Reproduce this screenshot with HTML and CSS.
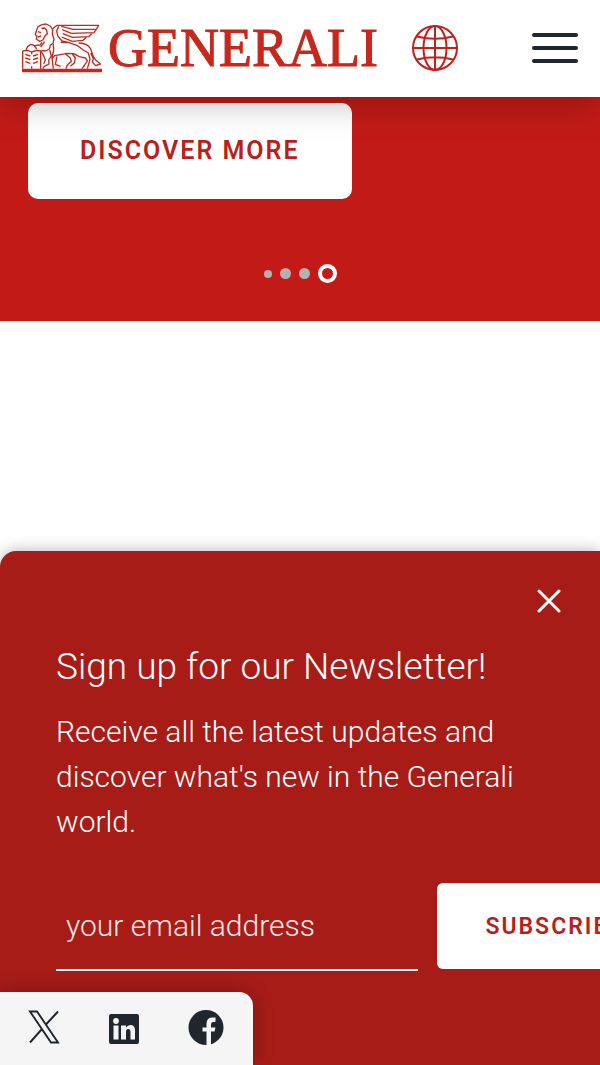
FILE: index.html
```html
<!DOCTYPE html>
<html lang="en">
<head>
<meta charset="utf-8">
<meta name="viewport" content="width=device-width, initial-scale=1">
<title>Generali</title>
<link rel="stylesheet" href="styles.css">
</head>
<body>
<header class="site-header">
  <a class="brand" href="#">
    <svg class="brand-lion" viewBox="36 40 240 150" aria-hidden="true">
      <path class="solid" d="M36 177H276V188H36Z"/>
      <g class="line">
        <path d="M38 124L52 122L65 127L79 122L92 124V177M38 124V177M65 127V134M65 170V177"/>
        <path d="M46 134L61 139M46 145L61 150M46 156L61 161M84 134L69 139M84 145L69 150M84 156L69 161"/>
        <path d="M48 121L53 110L63 104L72 107L80 118M74 108L90 106L96 98"/>
        <path d="M96 45L84 51L79 64L76 75L81 80L79 88L89 95L99 91L104 80L112 72L110 62L103 55L94 56M84 66L93 69M84 82L93 79"/>
        <path d="M96 45L108 43L121 49L128 60L127 74L132 88L129 101L121 107L118 118L106 124L94 122M104 96L92 112"/>
        <path d="M128 57L141 47H266L259 59H190L154 50M157 60L184 71L252 69L259 59M158 72L188 83L236 81L247 70M155 82L187 95L219 92L230 82"/>
        <path d="M146 50L140 65L144 80L156 94L177 99L203 108L220 121L235 130L240 149L232 177M152 98L179 99"/>
        <path d="M206 100Q234 101 242 118L250 141L258 152L271 163L257 168L247 157L250 147L242 130"/>
        <path d="M119 121L124 139L116 151L117 163L103 170L98 177M93 124L101 138L106 151L101 162M130 103L131 121L126 145L130 177"/>
        <path d="M126 147L134 138L171 131L191 132L208 141L226 145L232 153L224 166L216 177M167 133L181 145L184 155L172 166L168 177M187 133L196 145L193 160L181 170M141 140L136 164L152 170"/>
      </g>
    </svg>
    <span class="brand-name">GENERALI</span>
  </a>
  <button class="icon-button globe-button" type="button" aria-label="Choose language">
    <svg class="globe" viewBox="0 0 46 46" aria-hidden="true">
      <circle cx="23" cy="23" r="22"/>
      <ellipse cx="23" cy="23" rx="11.5" ry="22"/>
      <path d="M23 1V45M1 23H45M5 11.500Q23 16 41 11.500M5 34.500Q23 30 41 34.500"/>
    </svg>
  </button>
  <button class="icon-button menu-button" type="button" aria-label="Menu">
    <svg class="menu" viewBox="0 0 46 32" aria-hidden="true"><path d="M2 3H44M2 16H44M2 29H44"/></svg>
  </button>
</header>
<main class="content">
  <section class="hero">
    <a class="cta" href="#">DISCOVER MORE</a>
    <nav class="dots" aria-label="Slides">
      <button class="dot dot-small" type="button" aria-label="Slide 1"></button>
      <button class="dot" type="button" aria-label="Slide 2"></button>
      <button class="dot" type="button" aria-label="Slide 3"></button>
      <button class="dot dot-current" type="button" aria-label="Slide 4" aria-current="true"></button>
    </nav>
  </section>
</main>
<section class="newsletter">
  <button class="icon-button close-button" type="button" aria-label="Close">
    <svg class="close" viewBox="0 0 24 24" aria-hidden="true"><path d="M2 2L22 22M22 2L2 22"/></svg>
  </button>
  <h2 class="newsletter-title">Sign up for our Newsletter!</h2>
  <p class="newsletter-text">Receive all the latest updates and discover what's new in the Generali world.</p>
  <form class="signup">
    <input class="email" type="email" aria-label="Email address" placeholder="your email address">
    <button class="subscribe" type="submit">SUBSCRIBE</button>
  </form>
</section>
<nav class="social" aria-label="Social">
  <a class="social-link" href="#" aria-label="X">
    <svg class="social-icon" viewBox="0 0 36 36" aria-hidden="true">
      <path fill="none" stroke="#20262e" stroke-width="1.900" d="M4 2.500H11L32 33.500H25ZM32 2.500L19.500 16M16 20L4 33.500"/>
    </svg>
  </a>
  <a class="social-link" href="#" aria-label="LinkedIn">
    <svg class="social-icon" viewBox="0 0 36 36" aria-hidden="true">
      <rect x="2" y="5" width="30" height="30" rx="2" fill="#20262e"/>
      <circle cx="9" cy="12" r="2.900" fill="#f5f5f5"/>
      <path fill="#f5f5f5" d="M6.500 16.500H11.500V30.500H6.500ZM14 16.500H19V18.500Q20.500 16 23.500 16Q28 16 28 21.500V30.500H23.500V23Q23.500 20 21.200 20Q19 20 19 23V30.500H14Z"/>
    </svg>
  </a>
  <a class="social-link" href="#" aria-label="Facebook">
    <svg class="social-icon" viewBox="0 0 36 36" aria-hidden="true">
      <circle cx="18" cy="18.500" r="17.500" fill="#20262e"/>
      <path fill="#f5f5f5" d="M18.500 36V22.500H14.500V18.500H18.500V15Q18.500 8.500 24 8.500H27.500V13H25Q23 13 23 15.500V18.500H27.500L26.500 22.500H23V36Z"/>
    </svg>
  </a>
</nav>
</body>
</html>
```

FILE: styles.css
```css
* { box-sizing: border-box; }

body {
  margin: 0;
  min-height: 100vh;
  display: flex;
  flex-direction: column;
  background: #fff;
  font-family: Roboto, "Liberation Sans", sans-serif;
}

.site-header {
  position: relative;
  z-index: 1;
  display: flex;
  align-items: center;
  padding: 20px 22px 21px;
  background: #fff;
  box-shadow: 0 0 40px rgba(0, 0, 0, 0.35);
}

.brand {
  display: flex;
  align-items: center;
  gap: 6px;
  color: #c5281c;
  text-decoration: none;
}

.brand-lion { width: 80px; height: 50px; }
.brand-lion .solid { fill: #c5281c; }
.brand-lion .line {
  fill: none;
  stroke: #c5281c;
  stroke-width: 4;
  stroke-linejoin: round;
}

.brand-name {
  font-family: "Liberation Serif", serif;
  font-size: 54px;
  line-height: 56px;
  -webkit-text-stroke: 1px #c5281c;
}

.icon-button {
  display: flex;
  align-items: center;
  justify-content: center;
  padding: 0;
  border: 0;
  background: none;
}

.globe-button { margin-left: 34px; }
.globe { width: 46px; height: 46px; fill: none; stroke: #bf211c; stroke-width: 2; }
.menu-button { margin-left: auto; }
.menu { width: 46px; height: 32px; fill: none; stroke: #20262e; stroke-width: 4; stroke-linecap: round; }

.content { flex: 1; }

.hero {
  padding: 6px 28px 38px;
  background: #c21b17;
}

.cta {
  display: block;
  width: fit-content;
  padding: 32px 52px;
  border-radius: 10px;
  background: #fff;
  color: #b91f1b;
  font-size: 25px;
  font-weight: 600;
  line-height: 32px;
  letter-spacing: 2px;
  text-decoration: none;
}

.dots {
  display: flex;
  align-items: center;
  justify-content: center;
  gap: 8px;
  margin-top: 65px;
}

.dot {
  width: 11px;
  height: 11px;
  padding: 0;
  border: 0;
  border-radius: 50%;
  background: #b3b1b3;
}

.dot-small { width: 8px; height: 8px; }

.dot-current {
  width: 19px;
  height: 19px;
  border: 4px solid #fff;
  background: none;
}

.newsletter {
  padding: 30px 31px 94px 56px;
  border-top-left-radius: 16px;
  background: #a81c18;
  box-shadow: 0 0 16px rgba(0, 0, 0, 0.3);
  color: #fff;
  overflow: hidden;
}

.close-button { width: 40px; height: 40px; margin-left: auto; }
.close { width: 24px; height: 24px; fill: none; stroke: #fff; stroke-width: 3; stroke-linecap: round; }

.newsletter-title {
  margin: 22px 0 18px;
  font-size: 37px;
  font-weight: 300;
  line-height: 48px;
}

.newsletter-text {
  max-width: 480px;
  margin: 0 0 39px;
  font-size: 30px;
  font-weight: 300;
  line-height: 45px;
}

.signup {
  display: flex;
  gap: 19px;
  margin-right: -104px;
}

.email {
  flex: 1;
  min-width: 0;
  height: 88px;
  padding: 0 10px 2px;
  border: 0;
  border-bottom: 2px solid #fff;
  border-radius: 0;
  background: none;
  color: #fff;
  font: 300 30px Roboto, sans-serif;
}

.email::placeholder { color: #fff; opacity: 0.9; }

.subscribe {
  height: 86px;
  padding: 0 48px;
  border: 0;
  border-radius: 6px;
  background: #fff;
  color: #b91f1b;
  font: 600 23px Roboto, sans-serif;
  letter-spacing: 2px;
}

.social {
  position: fixed;
  left: 0;
  bottom: 0;
  display: flex;
  gap: 45px;
  padding: 17px 29px 20px 26px;
  border-top-right-radius: 14px;
  background: #f5f5f5;
  box-shadow: 0 0 20px rgba(0, 0, 0, 0.3);
}

.social-link { display: flex; }
.social-icon { width: 36px; height: 36px; }
```
